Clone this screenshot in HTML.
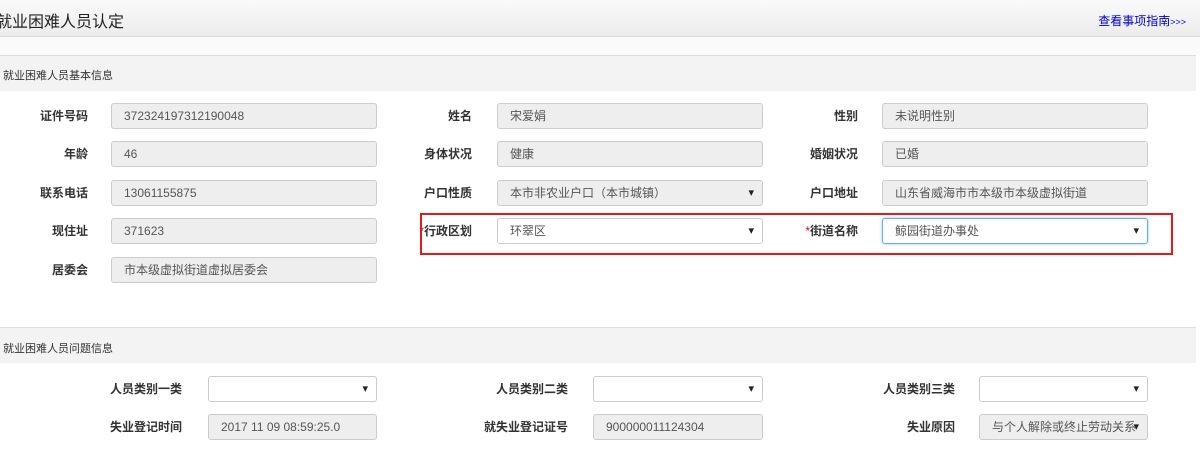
<!DOCTYPE html>
<html><head><meta charset="utf-8"><style>
*{margin:0;padding:0;box-sizing:border-box}
body{width:1200px;height:452px;overflow:hidden;background:#fff;font-family:"Liberation Sans","Noto Sans CJK SC",sans-serif;font-size:12px;color:#333;position:relative}
.a{position:absolute}
.hdr{left:0;top:0;width:1200px;height:37px;background:linear-gradient(#fafafa,#ececec);border-bottom:1px solid #d8d8d8}
.title{left:-4px;top:8px;font-size:16px;color:#222}
.link{right:14px;top:12px;font-size:12px;color:#0000cc}
.sec{left:0;width:1196px;height:36px;background:#f3f3f3;border-top:1px solid #ddd}
.sect{left:3px;font-size:11px;color:#333}
.lab{font-weight:bold;font-size:12px;color:#333;text-align:right;width:150px;margin-top:-2px}
.in{height:26px;border:1px solid #ccc;border-radius:3px;background:#eee;padding-left:12px;line-height:24px;color:#555;font-size:12px}
.w{background:#fff}
.sel:after{content:"▾";position:absolute;right:8px;top:0;font-size:11px;color:#222}
</style></head><body>
<div class="a hdr"></div>
<div class="a title">就业困难人员认定</div>
<div class="a link">查看事项指南<span style="font-size:9px">&gt;&gt;&gt;</span></div>
<div class="a" style="left:0;top:37px;width:1200px;height:18px;background:#fafafa"></div>
<div class="a sec" style="top:55px"></div>
<div class="a sect" style="top:67px">就业困难人员基本信息</div>

<div class="a lab" style="left:-62px;top:109px">证件号码</div><div class="a in" style="left:111px;top:103px;width:266px">372324197312190048</div>
<div class="a lab" style="left:322px;top:109px">姓名</div><div class="a in" style="left:497px;top:103px;width:266px">宋爱娟</div>
<div class="a lab" style="left:708px;top:109px">性别</div><div class="a in" style="left:882px;top:103px;width:266px">未说明性别</div>

<div class="a lab" style="left:-62px;top:147px">年龄</div><div class="a in" style="left:111px;top:141px;width:266px">46</div>
<div class="a lab" style="left:322px;top:147px">身体状况</div><div class="a in" style="left:497px;top:141px;width:266px">健康</div>
<div class="a lab" style="left:708px;top:147px">婚姻状况</div><div class="a in" style="left:882px;top:141px;width:266px">已婚</div>

<div class="a lab" style="left:-62px;top:186px">联系电话</div><div class="a in" style="left:111px;top:180px;width:266px">13061155875</div>
<div class="a lab" style="left:322px;top:186px">户口性质</div><div class="a in sel" style="left:497px;top:180px;width:266px">本市非农业户口（本市城镇）</div>
<div class="a lab" style="left:708px;top:186px">户口地址</div><div class="a in" style="left:882px;top:180px;width:266px">山东省威海市市本级市本级虚拟街道</div>

<div class="a lab" style="left:-62px;top:224px">现住址</div><div class="a in" style="left:111px;top:218px;width:266px">371623</div>
<div class="a lab" style="left:322px;top:224px"><span style="color:#e00;font-weight:normal">*</span>行政区划</div><div class="a in w sel" style="left:497px;top:218px;width:266px">环翠区</div>
<div class="a lab" style="left:708px;top:224px"><span style="color:#e00;font-weight:normal">*</span>街道名称</div><div class="a in w sel" style="left:882px;top:218px;width:266px;border-color:#66afe9;box-shadow:0 0 3px #9cc8ef">鲸园街道办事处</div>
<div class="a" style="left:420px;top:213px;width:753px;height:42px;border:2px solid #e21b1b"></div>

<div class="a lab" style="left:-62px;top:263px">居委会</div><div class="a in" style="left:111px;top:257px;width:266px">市本级虚拟街道虚拟居委会</div>

<div class="a sec" style="top:327px"></div>
<div class="a sect" style="top:340px">就业困难人员问题信息</div>

<div class="a lab" style="left:32px;top:382px">人员类别一类</div><div class="a in w sel" style="left:208px;top:376px;width:169px"></div>
<div class="a lab" style="left:418px;top:382px">人员类别二类</div><div class="a in w sel" style="left:593px;top:376px;width:170px"></div>
<div class="a lab" style="left:805px;top:382px">人员类别三类</div><div class="a in w sel" style="left:979px;top:376px;width:169px"></div>

<div class="a lab" style="left:32px;top:420px">失业登记时间</div><div class="a in" style="left:208px;top:414px;width:169px">2017 11 09 08:59:25.0</div>
<div class="a lab" style="left:418px;top:420px">就失业登记证号</div><div class="a in" style="left:593px;top:414px;width:170px">900000011124304</div>
<div class="a lab" style="left:805px;top:420px">失业原因</div><div class="a in sel" style="left:979px;top:414px;width:169px;overflow:hidden;white-space:nowrap;padding-right:20px">与个人解除或终止劳动关系</div>
</body></html>
